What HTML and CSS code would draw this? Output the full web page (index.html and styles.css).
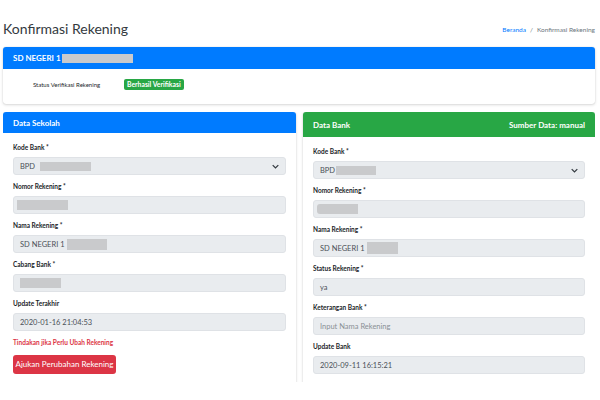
FILE: index.html
```html
<!DOCTYPE html>
<html>
<head>
<meta charset="utf-8">
<link rel="stylesheet" href="styles.css">
</head>
<body>
<div class="page">
  <div class="topbar">
    <h1 class="title">Konfirmasi Rekening</h1>
    <div class="crumbs"><a class="crumb-link">Beranda</a><span class="crumb-sep">/</span><span class="crumb-cur">Konfirmasi Rekening</span></div>
  </div>

  <div class="card card-top">
    <div class="card-head head-blue">SD NEGERI 1 <span class="redact r-head"></span></div>
    <div class="card-body status-body">
      <span class="status-label">Status Verifikasi Rekening</span>
      <span class="badge">Berhasil Verifikasi</span>
    </div>
  </div>

  <div class="cols">
    <div class="card col">
      <div class="card-head head-blue head-left">Data Sekolah</div>
      <div class="card-body form-body">
        <div class="field">
          <label class="lbl">Kode Bank *</label>
          <div class="ctl select">BPD <span class="redact r-bpd"></span>
            <svg class="chev" viewBox="0 0 10 6" width="7" height="5"><path d="M1 1l4 4 4-4" fill="none" stroke="#343a40" stroke-width="1.8"/></svg>
          </div>
        </div>
        <div class="field">
          <label class="lbl">Nomor Rekening *</label>
          <div class="ctl ctl-tight"><span class="redact r-nomor"></span></div>
        </div>
        <div class="field">
          <label class="lbl">Nama Rekening *</label>
          <div class="ctl">SD NEGERI 1 <span class="redact r-nama"></span></div>
        </div>
        <div class="field">
          <label class="lbl">Cabang Bank *</label>
          <div class="ctl"><span class="redact r-cabang"></span></div>
        </div>
        <div class="field">
          <label class="lbl">Update Terakhir</label>
          <div class="ctl">2020-01-16 21:04:53</div>
        </div>
        <div class="warn">Tindakan jika Perlu Ubah Rekening</div>
        <button class="btn-red">Ajukan Perubahan Rekening</button>
      </div>
    </div>

    <div class="card col">
      <div class="card-head head-green head-right"><span>Data Bank</span><span>Sumber Data: manual</span></div>
      <div class="card-body form-body">
        <div class="field">
          <label class="lbl">Kode Bank *</label>
          <div class="ctl select">BPD<span class="redact r-bpd2"></span>
            <svg class="chev" viewBox="0 0 10 6" width="7" height="5"><path d="M1 1l4 4 4-4" fill="none" stroke="#343a40" stroke-width="1.8"/></svg>
          </div>
        </div>
        <div class="field">
          <label class="lbl">Nomor Rekening *</label>
          <div class="ctl ctl-tight"><span class="redact r-nomor2"></span></div>
        </div>
        <div class="field">
          <label class="lbl">Nama Rekening *</label>
          <div class="ctl">SD NEGERI 1 <span class="redact r-nama2"></span></div>
        </div>
        <div class="field">
          <label class="lbl">Status Rekening *</label>
          <div class="ctl">ya</div>
        </div>
        <div class="field">
          <label class="lbl">Keterangan Bank *</label>
          <div class="ctl placeholder">Input Nama Rekening</div>
        </div>
        <div class="field">
          <label class="lbl">Update Bank</label>
          <div class="ctl">2020-09-11 16:15:21</div>
        </div>
      </div>
    </div>
  </div>
</div>
</body>
</html>
```

FILE: styles.css
```css
* { box-sizing: border-box; }
html, body { margin: 0; padding: 0; background: #fff; }
body {
  font-family: "Lato", "Open Sans", "Liberation Sans", sans-serif;
  color: #212529;
  width: 600px;
  height: 400px;
  overflow: hidden;
}
.page { padding: 0 5px 0 3px; }

.topbar {
  display: flex;
  justify-content: space-between;
  align-items: center;
  height: 47px;
  padding-top: 10px;
}
.title {
  margin: 0;
  font-size: 14px;
  font-weight: 400;
  color: #343a40;
}
.crumbs { font-size: 6.5px; color: #6c757d; padding-top: 2px; }
.crumb-link { color: #007bff; }
.crumb-sep { padding: 0 4px; color: #6c757d; }

.card {
  background: #fff;
  border-radius: 3px;
  box-shadow: 0 0 1px rgba(0,0,0,.2), 0 1px 3px rgba(0,0,0,.15);
}
.card-head {
  color: #fff;
  font-weight: 700;
  font-size: 8px;
  padding: 0 10px;
  display: flex;
  align-items: center;
  border-radius: 3px 3px 0 0;
}
.head-blue { background: #007bff; }
.head-green { background: #28a745; }
.card-top .card-head { height: 22px; }
.head-left { height: 21px; }
.head-right { height: 25px; justify-content: space-between; }

.redact { display: inline-block; background: #c9cacc; vertical-align: middle; }
.r-head { width: 71px; height: 9px; margin-left: 1px; }

.status-body {
  height: 35px;
  display: flex;
  align-items: center;
  padding: 0 0 5px 30px;
}
.status-label { font-size: 6px; color: #212529; width: 91px; }
.badge {
  background: #28a745;
  color: #fff;
  font-weight: 700;
  font-size: 6.8px;
  padding: 2px 3px;
  border-radius: 2px;
  line-height: 7px;
}

.cols {
  margin-top: 8px;
  display: grid;
  grid-template-columns: 293px 292px;
  column-gap: 7px;
  height: 270px;
  overflow: hidden;
  align-items: start;
}
.col { border-radius: 3px 3px 0 0; min-height: 300px; }
.form-body { padding: 10px 10px 0 10px; }

.field { margin-bottom: 7px; }
.lbl {
  display: block;
  font-size: 6.5px;
  font-weight: 700;
  line-height: 10px;
  margin-bottom: 4px;
  color: #212529;
}
.ctl {
  position: relative;
  height: 18px;
  background: #e9ecef;
  border: 1px solid #dfe2e6;
  border-radius: 3px;
  font-size: 7.5px;
  color: #495057;
  padding: 0 6px;
  display: flex;
  align-items: center;
  white-space: pre;
}
.ctl-tight { padding-left: 3px; }
.placeholder { color: #8a9096; }
.select .chev { position: absolute; right: 6px; top: 6px; }
.r-bpd { width: 51px; height: 9px; margin-left: 3px; }
.r-bpd2 { width: 40px; height: 9px; margin-left: 1px; }
.r-nomor { width: 51px; height: 10px; }
.r-nomor2 { width: 41px; height: 10px; border-radius: 3px 0 0 3px; }
.r-nama { width: 40px; height: 11px; margin-left: 1px; }
.r-nama2 { width: 31px; height: 12px; margin-left: 1px; }
.r-cabang { width: 41px; height: 10px; }

.warn {
  color: #dc3545;
  font-size: 6.5px;
  font-weight: 700;
  margin-top: 6px;
  line-height: 10px;
  margin-bottom: 3px;
}
.btn-red {
  background: #dc3545;
  color: #fff;
  border: none;
  border-radius: 3px;
  font-family: inherit;
  font-size: 8px;
  height: 19px;
  width: 103px;
  padding: 0;
  margin-left: 0;
}
```
